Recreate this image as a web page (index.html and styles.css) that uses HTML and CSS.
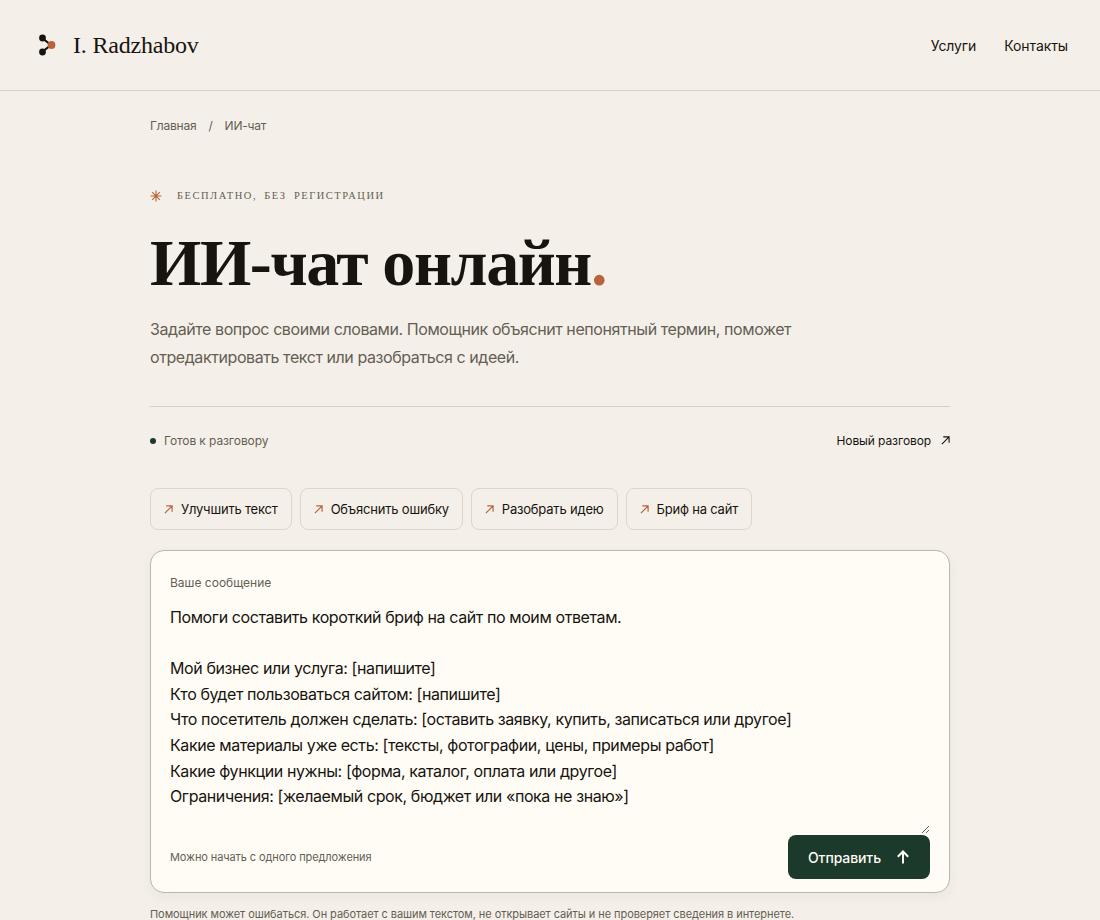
FILE: index.html
```html
<!DOCTYPE html>
<html lang="ru">
<head>
  <meta charset="utf-8">
  <title>ИИ-чат онлайн</title>
  <link rel="stylesheet" href="styles.css">
</head>
<body>
<header class="site-header">
  <a class="brand" href="#">
    <svg class="brand-mark" width="20" height="24" viewBox="0 0 20 24">
      <path d="M4 5 L13 12 L4 19" fill="none" stroke="#17140f" stroke-width="2.2"/>
      <circle cx="4.5" cy="5" r="3.4" fill="#17140f"/>
      <circle cx="4.5" cy="19" r="3.4" fill="#17140f"/>
      <circle cx="13.5" cy="12" r="3.9" fill="#b9633a"/>
    </svg>
    <span>I. Radzhabov</span>
  </a>
  <nav class="site-nav">
    <a href="#">Услуги</a>
    <a href="#">Контакты</a>
  </nav>
</header>

<main class="page">
  <div class="crumbs">
    <a href="#">Главная</a>
    <span>/</span>
    <span>ИИ-чат</span>
  </div>

  <div class="eyebrow">
    <svg width="12" height="12" viewBox="0 0 12 12">
      <path d="M6 0.5V11.5M0.5 6H11.5M2.2 2.2L9.8 9.8M9.8 2.2L2.2 9.8" stroke="#b9633a" stroke-width="1.1"/>
    </svg>
    <span>Бесплатно, без регистрации</span>
  </div>

  <h1>ИИ-чат онлайн<span class="dot">.</span></h1>

  <p class="lead">Задайте вопрос своими словами. Помощник объяснит непонятный термин, поможет отредактировать текст или разобраться с идеей.</p>

  <div class="status-bar">
    <div class="status"><i></i>Готов к разговору</div>
    <a class="new-chat" href="#">Новый разговор
      <svg width="9" height="9" viewBox="0 0 10 10"><path d="M1 9L9 1M2.5 1H9V7.5" fill="none" stroke="#17140f" stroke-width="1.2"/></svg>
    </a>
  </div>

  <div class="chips">
    <button class="chip"><svg width="9" height="9" viewBox="0 0 10 10"><path d="M1 9L9 1M2.5 1H9V7.5" fill="none" stroke="#b9633a" stroke-width="1.3"/></svg>Улучшить текст</button>
    <button class="chip"><svg width="9" height="9" viewBox="0 0 10 10"><path d="M1 9L9 1M2.5 1H9V7.5" fill="none" stroke="#b9633a" stroke-width="1.3"/></svg>Объяснить ошибку</button>
    <button class="chip"><svg width="9" height="9" viewBox="0 0 10 10"><path d="M1 9L9 1M2.5 1H9V7.5" fill="none" stroke="#b9633a" stroke-width="1.3"/></svg>Разобрать идею</button>
    <button class="chip"><svg width="9" height="9" viewBox="0 0 10 10"><path d="M1 9L9 1M2.5 1H9V7.5" fill="none" stroke="#b9633a" stroke-width="1.3"/></svg>Бриф на сайт</button>
  </div>

  <form class="composer">
    <label for="message">Ваше сообщение</label>
    <textarea id="message" spellcheck="false">Помоги составить короткий бриф на сайт по моим ответам.

Мой бизнес или услуга: [напишите]
Кто будет пользоваться сайтом: [напишите]
Что посетитель должен сделать: [оставить заявку, купить, записаться или другое]
Какие материалы уже есть: [тексты, фотографии, цены, примеры работ]
Какие функции нужны: [форма, каталог, оплата или другое]
Ограничения: [желаемый срок, бюджет или «пока не знаю»]</textarea>
    <div class="composer-foot">
      <span class="hint">Можно начать с одного предложения</span>
      <button class="send" type="button">Отправить
        <svg width="14" height="14" viewBox="0 0 14 14"><path d="M7 13.5V1.5M1.8 6.8L7 1.5L12.2 6.8" fill="none" stroke="#fffcf6" stroke-width="2"/></svg>
      </button>
    </div>
  </form>

  <p class="note">Помощник может ошибаться. Он работает с вашим текстом, не открывает сайты и не проверяет сведения в интернете.</p>
</main>
</body>
</html>
```

FILE: styles.css
```css
body {
  margin: 0;
  background: #f4f0e9;
  color: #17140f;
  font-family: Inter, "Noto Sans", sans-serif;
  font-size: 14px;
}
a {
  color: inherit;
  text-decoration: none;
}
.site-header {
  height: 90px;
  padding: 0 32px 0 38px;
  border-bottom: 1px solid #d6d0c6;
  display: flex;
  align-items: center;
  justify-content: space-between;
}
.brand {
  display: flex;
  align-items: center;
  gap: 15px;
  font-family: "Liberation Serif", serif;
  font-size: 24px;
  letter-spacing: -0.2px;
}
.site-nav {
  display: flex;
  gap: 28px;
  font-size: 14px;
  letter-spacing: -0.1px;
}
.page {
  width: 800px;
  margin: 0 auto;
}
.crumbs {
  padding-top: 27px;
  display: flex;
  gap: 12px;
  font-size: 12px;
  line-height: 15px;
  letter-spacing: -0.2px;
  color: #655e54;
}
.eyebrow {
  margin-top: 56px;
  display: flex;
  align-items: center;
  gap: 15px;
  font-family: "Liberation Serif", serif;
  font-size: 10.5px;
  line-height: 14px;
  letter-spacing: 1.5px;
  word-spacing: 0.3em;
  text-transform: uppercase;
  color: #655e54;
}
h1 {
  margin: 22px 0 0;
  font-family: "Liberation Serif", serif;
  font-size: 66px;
  font-weight: 700;
  line-height: 76px;
  letter-spacing: -1.4px;
}
.dot {
  color: #b9633a;
}
.lead {
  margin: 14px 0 0;
  max-width: 660px;
  font-size: 16px;
  line-height: 28px;
  letter-spacing: -0.42px;
  color: #655e54;
}
.status-bar {
  margin-top: 35px;
  padding-top: 26px;
  border-top: 1px solid #d6d0c6;
  display: flex;
  align-items: center;
  justify-content: space-between;
  font-size: 12px;
  line-height: 15px;
  letter-spacing: -0.1px;
}
.status {
  display: flex;
  align-items: center;
  gap: 8px;
  color: #655e54;
}
.status i {
  width: 6px;
  height: 6px;
  border-radius: 50%;
  background: #1b3a2b;
}
.new-chat {
  display: flex;
  align-items: center;
  gap: 10px;
}
.chips {
  margin-top: 40px;
  display: flex;
  gap: 8px;
}
.chip {
  height: 42px;
  padding: 0 13px;
  display: flex;
  align-items: center;
  gap: 8px;
  background: #f4f0e9;
  border: 1px solid #dcd6cb;
  border-radius: 8px;
  color: #17140f;
  font-family: inherit;
  font-size: 13px;
  letter-spacing: -0.2px;
}
.composer {
  margin-top: 20px;
  height: 343px;
  box-sizing: border-box;
  padding: 24px 19px 13px;
  background: #fffcf6;
  border: 1px solid #bdb6a9;
  border-radius: 14px;
  box-shadow: 0 4px 12px rgba(60, 50, 30, 0.05);
  display: flex;
  flex-direction: column;
}
.composer label {
  font-size: 12px;
  line-height: 15px;
  color: #655e54;
}
.composer textarea {
  margin-top: 15px;
  height: 229px;
  padding: 0;
  border: 0;
  outline: 0;
  background: transparent;
  color: #17140f;
  font-family: inherit;
  font-size: 16px;
  line-height: 25.6px;
  letter-spacing: -0.4px;
  resize: vertical;
}
.composer-foot {
  margin-top: auto;
  display: flex;
  align-items: center;
  justify-content: space-between;
}
.hint {
  font-size: 11px;
  letter-spacing: -0.1px;
  color: #655e54;
}
.send {
  width: 142px;
  height: 44px;
  display: flex;
  align-items: center;
  justify-content: center;
  gap: 15px;
  background: #1b3a2b;
  border: 0;
  border-radius: 8px;
  color: #fffcf6;
  font-family: inherit;
  font-size: 14px;
  font-weight: 500;
  letter-spacing: -0.1px;
}
.note {
  margin: 14px 0 0;
  font-size: 11px;
  line-height: 15px;
  letter-spacing: -0.07px;
  color: #655e54;
}
```
